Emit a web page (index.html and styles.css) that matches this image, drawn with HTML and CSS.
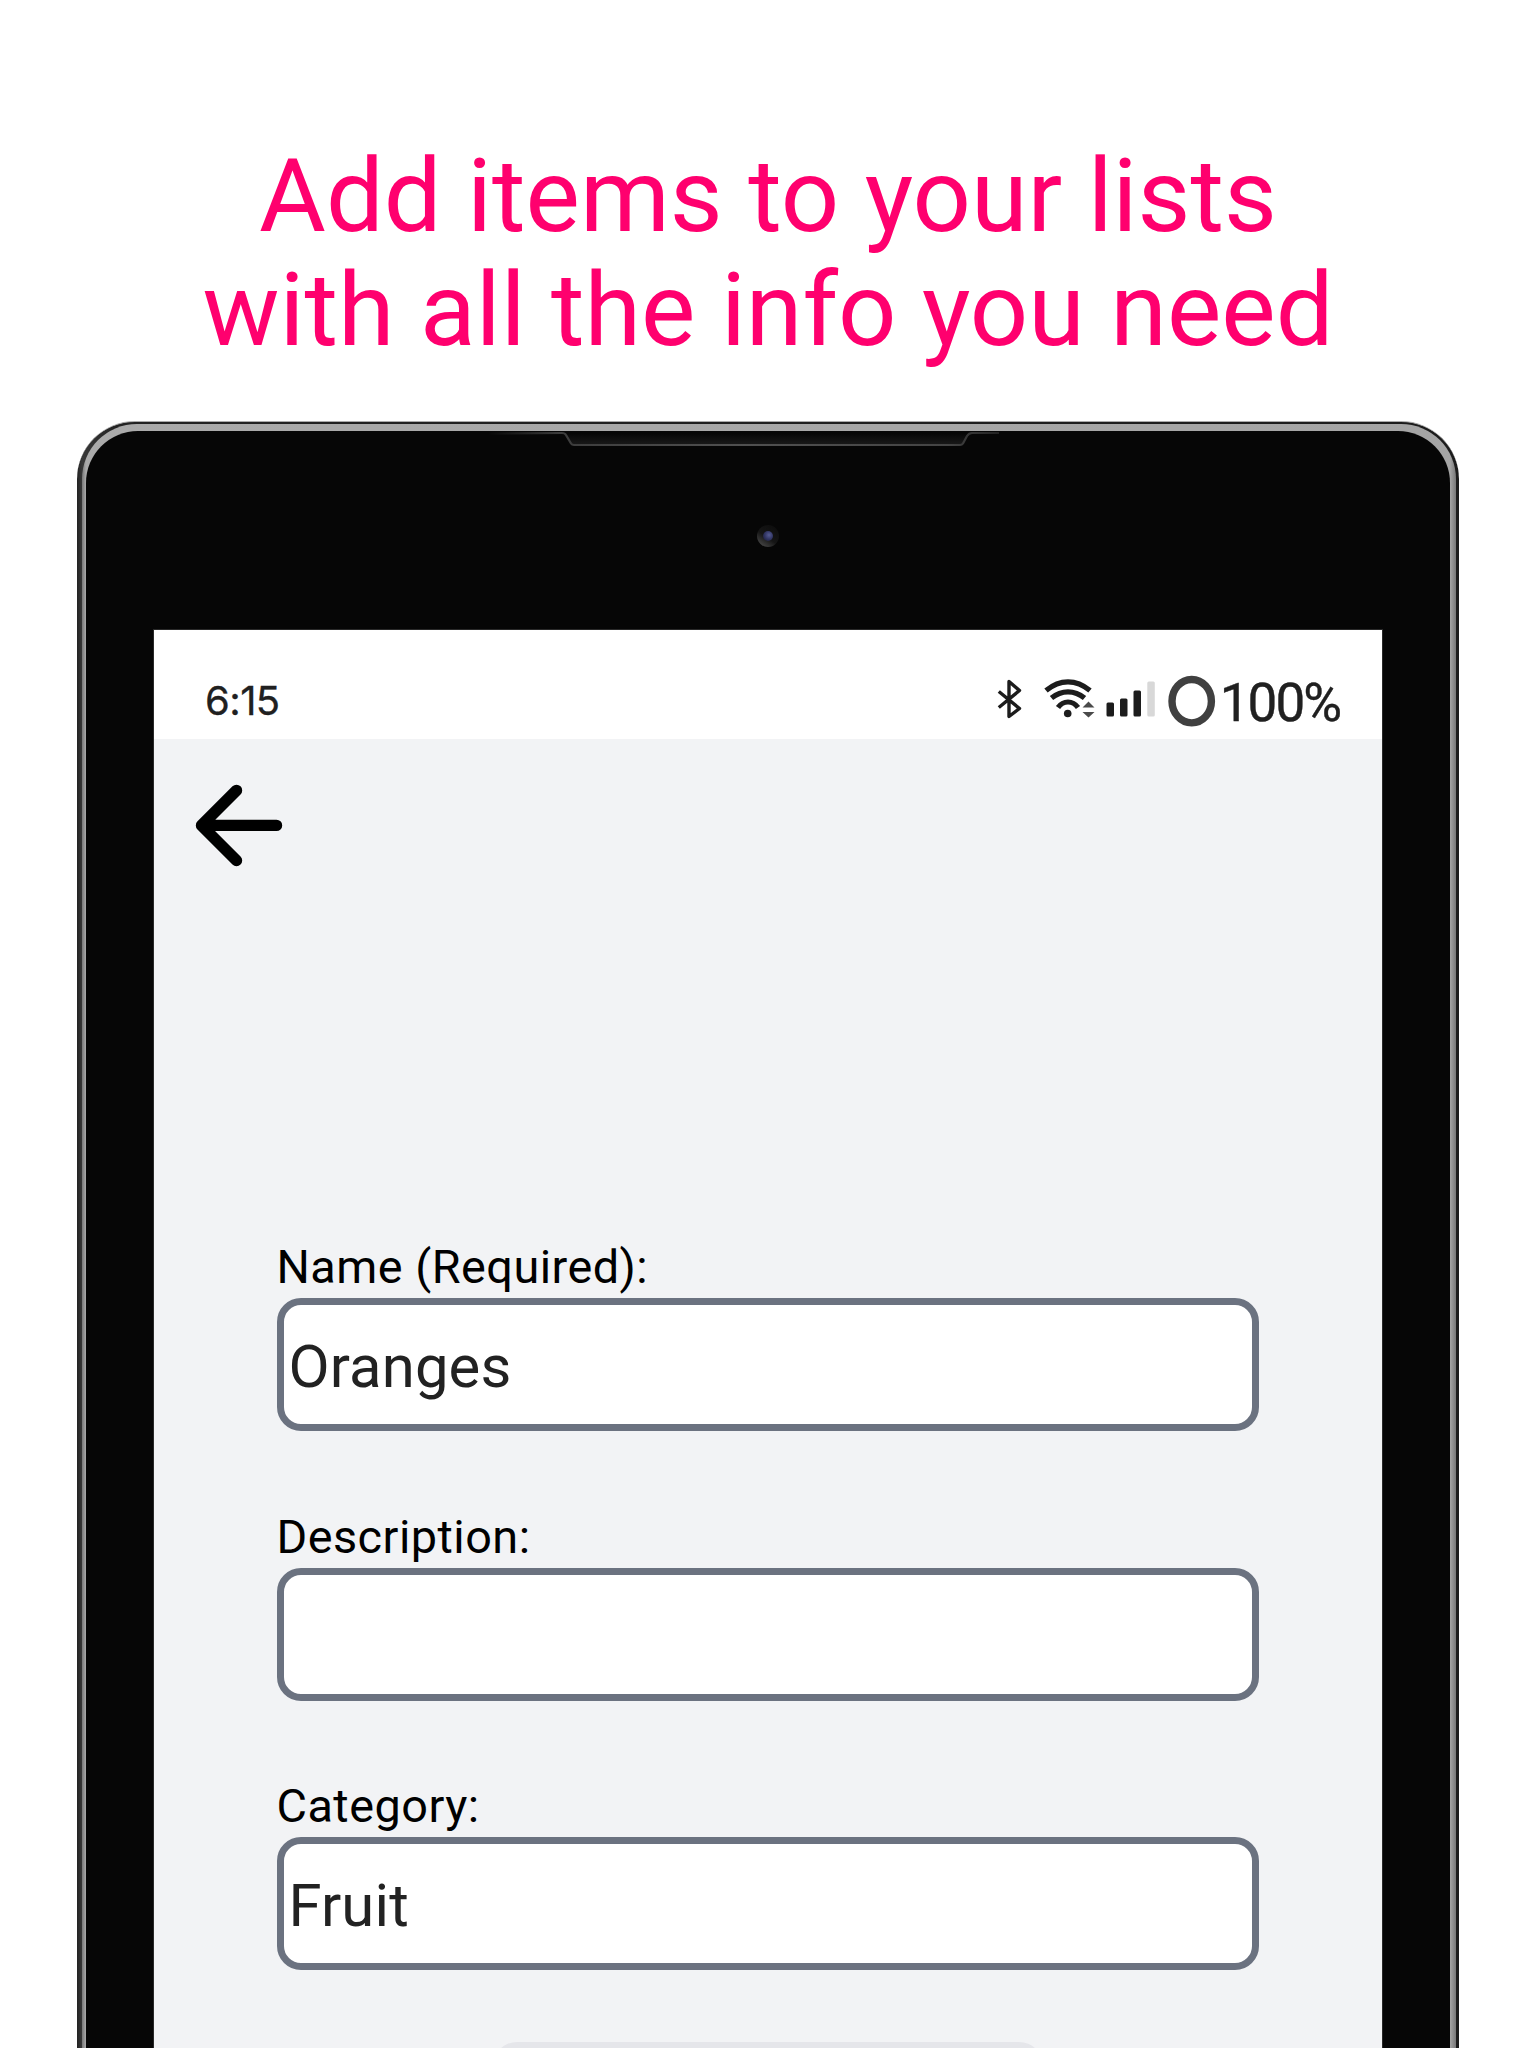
FILE: index.html
```html
<!DOCTYPE html>
<html lang="en">
<head>
<meta charset="utf-8">
<title>Add items</title>
<link rel="stylesheet" href="styles.css">
</head>
<body>
<main class="promo">
  <h1 class="headline">Add items to your lists<br>with all the info you need</h1>
  <div class="device">
    <div class="rim">
      <div class="glass">
        <svg class="speaker" width="520" height="24" viewBox="0 0 520 24">
          <defs>
            <linearGradient id="slot" x1="0" y1="0" x2="0" y2="1"><stop offset="0" stop-color="#050505"/><stop offset="1" stop-color="#191919"/></linearGradient>
            <linearGradient id="lip" x1="0" y1="0" x2="1" y2="0"><stop offset="0" stop-color="#060606"/><stop offset=".14" stop-color="#3c3c3c"/><stop offset=".5" stop-color="#505050"/><stop offset=".9" stop-color="#444"/><stop offset="1" stop-color="#222"/></linearGradient>
          </defs>
          <path d="M85 2L92 13.500H482L490 2Z" fill="url(#slot)"/>
          <path d="M8 2.600L82 2Q85 2 86 4L91 12.500Q92 14 94 14H480Q482 14 483 12.500L487 5Q489 2 492 2H519" fill="none" stroke="url(#lip)" stroke-width="2.200"/>
        </svg>
        <div class="camera"><div class="lens"></div></div>
        <div class="screen">
          <div class="status">
            <span class="clock">6:15</span>
            <div class="indicators">
              <svg class="bluetooth" width="26" height="60" viewBox="0 0 26 60"><path d="M1.800 20.500L22.500 37.500L12 45.500V10.500L22.500 19.500L1.800 36.500" fill="none" stroke="#1c1c1c" stroke-width="3.400" stroke-linejoin="round"/></svg>
              <svg class="wifi" width="52" height="60" viewBox="0 0 52 60">
                <g fill="none" stroke="#1c1c1c" stroke-width="5.200">
                  <path d="M2 19.500Q12.500 10.800 24 10.800T46 19.500"/>
                  <path d="M7.500 27Q15 20.800 24 20.800T40.500 27"/>
                  <path d="M14 36.500Q18 31 24 31T34 36.500"/>
                </g>
                <circle cx="23.700" cy="42.500" r="3.800" fill="#1c1c1c"/>
                <path d="M38.500 36.500L44.500 30.500L50.500 36.500ZM38.500 41L44.500 46.500L50.500 41Z" fill="#4a4a4a"/>
              </svg>
              <svg class="signal" width="50" height="60" viewBox="0 0 50 60">
                <rect x=".5" y="31.500" width="7.500" height="14" rx="1.500" fill="#1c1c1c"/>
                <rect x="14" y="27.500" width="7.500" height="18" rx="1.500" fill="#1c1c1c"/>
                <rect x="27.500" y="19.500" width="7.500" height="26" rx="1.500" fill="#1c1c1c"/>
                <rect x="41.300" y="10.500" width="7.500" height="35" rx="1.500" fill="#d8d8d8"/>
              </svg>
              <svg class="ring" width="50" height="60" viewBox="0 0 50 60"><ellipse cx="24.700" cy="30.200" rx="19.700" ry="21.700" fill="none" stroke="#404040" stroke-width="7.400"/></svg>
              <span class="percent">100%</span>
            </div>
          </div>
          <div class="toolbar">
            <svg class="back" width="90" height="86" viewBox="0 0 90 86"><path d="M43.500 7.400L8.500 42.400L43.500 77.500M8.500 42.400H83.500" fill="none" stroke="#000" stroke-width="11.400" stroke-linecap="round" stroke-linejoin="round"/></svg>
          </div>
          <div class="form">
            <div class="field"><div class="label">Name (Required):</div><div class="input">Oranges</div></div>
            <div class="field"><div class="label">Description:</div><div class="input"></div></div>
            <div class="field"><div class="label">Category:</div><div class="input">Fruit</div></div>
            <div class="button"></div>
          </div>
        </div>
      </div>
    </div>
  </div>
</main>
</body>
</html>
```
FILE: styles.css
```css
* { box-sizing: border-box; }
body { margin: 0; background: #fff; font-family: Roboto, "Liberation Sans", sans-serif; }
.promo { height: 2048px; overflow: hidden; padding-top: 139px; }
.headline { margin: 0 0 54px; text-align: center; font-weight: 400; font-size: 102.550px; line-height: 114px; color: #ff006e; white-space: nowrap; }
.device { width: 1382.500px; height: 1640px; margin-left: 76.500px; padding: 2px 3.500px 0 5.500px; border-radius: 58px 58px 0 0; background: linear-gradient(90deg, #222 0, #383838 5px, #222 40px, #1c1c1c); border-top: 1px solid #aaa; }
.rim { height: 100%; padding: 7px 6px 0 4px; border-radius: 55px 55px 0 0; background: linear-gradient(90deg, #777, #aaa 4px, #a5a5a5 1368px, #777); }
.glass { position: relative; height: 100%; padding: 199px 67.500px 0; border-radius: 52px 52px 0 0; background: #060606; }
.speaker { position: absolute; left: 394px; top: 0; }
.camera { position: absolute; left: 671px; top: 94px; width: 22px; height: 22px; padding: 6px; border-radius: 50%; background: linear-gradient(35deg, #555, #151515 45%, #0b0b0b); }
.lens { width: 10px; height: 10px; border-radius: 50%; background: radial-gradient(circle at 60% 40%, #555b91, #303462 50%, #17182c); }
.screen { height: 1430px; background: #f2f3f5; box-shadow: 0 0 0 1px #292929; }
.status { display: flex; justify-content: space-between; height: 109px; padding: 41px 42px 0 51.500px; background: #fff; color: #202020; }
.clock { font: 400 40px/59px Inter, sans-serif; letter-spacing: -.6px; -webkit-text-stroke: .3px #202020; }
.indicators { display: flex; }
.wifi { margin-left: 21px; }
.signal { margin-left: 10px; }
.ring { margin-left: 10.500px; }
.percent { margin-left: 3px; font-size: 53px; line-height: 64px; letter-spacing: -2px; -webkit-text-stroke: .4px #202020; }
.toolbar { height: 502px; padding: 44px 0 0 39px; }
.form { padding: 0 123px; }
.field { height: 269.700px; }
.label { margin-bottom: 4px; font-size: 46.800px; line-height: 53px; letter-spacing: .48px; color: #000; white-space: nowrap; }
.input { height: 133px; padding: 3px 0 0 5px; border: 7px solid #6b7280; border-radius: 24px; background: #fff; color: #222; font-size: 59.800px; line-height: 119px; letter-spacing: .15px; }
.button { width: 550px; height: 120px; margin: -8px auto 0; border-radius: 24px; background: #e5e6ea; }
```
